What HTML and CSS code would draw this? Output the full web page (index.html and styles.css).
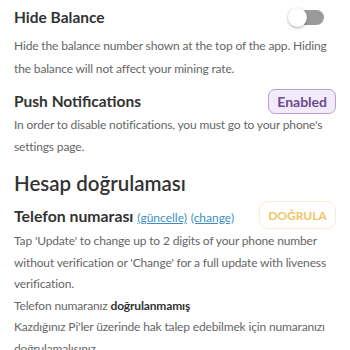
FILE: index.html
```
<!DOCTYPE html>
<html>
<head>
<meta charset="utf-8">
<link rel="stylesheet" href="styles.css">
</head>
<body>
<div class="page">
  <section class="setting">
    <div class="row">
      <h2 class="title">Hide Balance</h2>
      <div class="toggle"><span class="thumb"></span></div>
    </div>
    <p class="desc">Hide the balance number shown at the top of the app. Hiding the balance will not affect your mining rate.</p>
  </section>
  <section class="setting">
    <div class="row">
      <h2 class="title">Push Notifications</h2>
      <button class="btn-enabled">Enabled</button>
    </div>
    <p class="desc desc-tight">In order to disable notifications, you must go to your phone's settings page.</p>
  </section>
  <h1 class="heading">Hesap doğrulaması</h1>
  <div class="row phone-row">
    <h2 class="title title-phone">Telefon numarası <a class="link">(güncelle)</a> <a class="link">(change)</a></h2>
    <button class="btn-verify">DOĞRULA</button>
  </div>
  <p class="desc desc-small">Tap 'Update' to change up to 2 digits of your phone number without verification or 'Change' for a full update with liveness verification.</p>
  <p class="desc desc-small">Telefon numaranız <b>doğrulanmamış</b></p>
  <p class="desc desc-small">Kazdığınız Pi'ler üzerinde hak talep edebilmek için numaranızı doğrulamalısınız.</p>
</div>
</body>
</html>
```
FILE: styles.css
```
html, body { margin: 0; padding: 0; background: #fff; }
body { font-family: Lato, "Open Sans", sans-serif; color: #333; }
.page { padding: 0 14px; }
.row { display: flex; align-items: center; justify-content: space-between; }
.title { margin: 0; font-size: 15.5px; font-weight: 700; color: #333; }
.title-phone { font-size: 15.8px; }
.setting:first-child .row { height: 34px; }
.desc { margin: 0; font-size: 12px; letter-spacing: -0.15px; line-height: 23px; color: #666; }
.toggle { position: relative; width: 27px; height: 15px; background: #9a9a9a; border-radius: 8px; margin-right: 12px; }
.thumb { position: absolute; left: -9px; top: -2px; width: 19px; height: 19px; border-radius: 50%; background: #fff; box-shadow: 0 1px 3px rgba(0,0,0,0.35); }
.setting:nth-child(2) { margin-top: 8px; }
.setting:nth-child(2) .row { height: 26px; }
.btn-enabled { font-family: inherit; font-size: 14px; font-weight: 700; color: #6b4a8e; background: #f3eafb; border: 1.5px solid #b8a1cf; border-radius: 7px; height: 25px; padding: 0 8px; }
.desc-tight { line-height: 22px; }
.heading { margin: 12px 0 0; font-size: 20.5px; font-weight: 600; color: #333; height: 26px; line-height: 26px; }
.phone-row { height: 30px; margin-top: 4px; }
.link { font-size: 12px; font-weight: 400; color: #3b8fc4; text-decoration: underline; }
.btn-verify { font-family: inherit; font-size: 12px; font-weight: 700; color: #f1c466; background: #fff; border: 1.5px solid #f8ecd2; border-radius: 9px; height: 28px; width: 77px; padding: 0; }
.desc-small { line-height: 21.5px; }
.desc b { color: #333; }
```
